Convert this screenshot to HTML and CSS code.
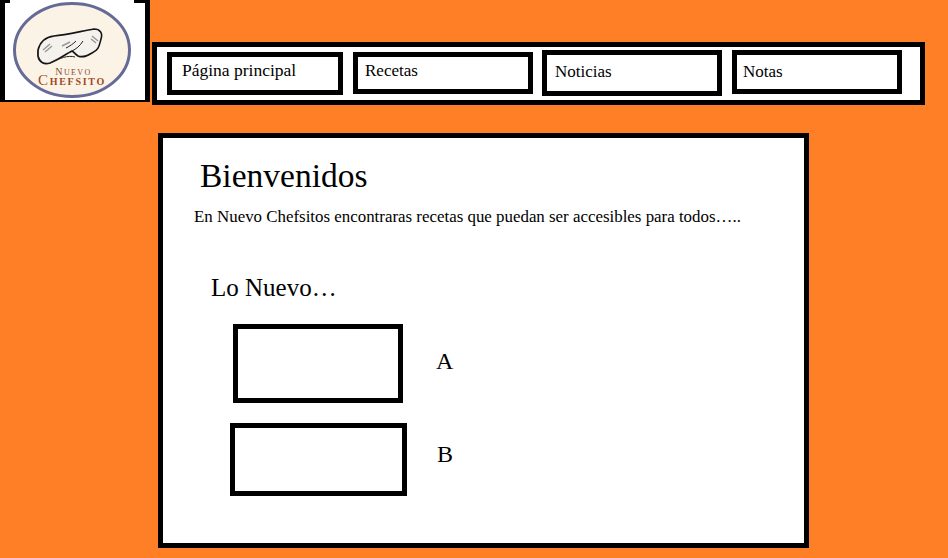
FILE: index.html
```html
<!DOCTYPE html>
<html lang="es">
<head>
<meta charset="UTF-8">
<meta name="viewport" content="width=device-width, initial-scale=1.0">
<title>Nuevo Chefsito</title>
<link rel="stylesheet" href="styles.css">
</head>
<body>

<div class="header">
  <div class="logo">
    <svg class="logoImg" viewBox="5 0 140 100" width="140" height="100">
      <ellipse cx="72" cy="50" rx="57.5" ry="46.5" fill="#fbf3e6" stroke="#666a96" stroke-width="3"/>
      <path d="M38 50 C40 42 46 37 54 36 C66 35 82 31 94 29 C100 29 103 33 101 39 C99 46 99 50 92 53 C87 56 83 58 78 56 C75 54 74 52 72 51 C66 54 58 60 50 63 C44 65 39 62 38 56 Z" fill="#f5f2ee" stroke="#151515" stroke-width="1.6"/>
      <path d="M38 50 C37 55 39 60 42 62 M72 51 C76 49 80 46 83 41 M66 48 C70 46 73 44 76 41 M50 63 C60 58 68 55 75 57" fill="none" stroke="#222" stroke-width="1"/>
      <path d="M43 50 L50 44 M45 52 L52 46 M92 36 L98 41 M91 39 L96 43 M62 46 L70 42" fill="none" stroke="#999" stroke-width="1.5"/>
      <text class="logoTop" x="73.5" y="75" text-anchor="middle"><tspan class="logoCap">N</tspan>UEVO</text>
      <text class="logoBottom" x="72" y="84.5" text-anchor="middle"><tspan class="logoCapBig">C</tspan>HEFSITO</text>
    </svg>
  </div>
  <div class="nav">
    <a class="navItem item1">Página principal</a>
    <a class="navItem item2">Recetas</a>
    <a class="navItem item3">Noticias</a>
    <a class="navItem item4">Notas</a>
  </div>
</div>

<div class="main">
  <h1>Bienvenidos</h1>
  <p class="intro">En Nuevo Chefsitos encontraras recetas que puedan ser accesibles para todos…..</p>
  <h2>Lo Nuevo…</h2>
  <div class="row rowA">
    <div class="box boxA"></div>
    <span class="label">A</span>
  </div>
  <div class="row rowB">
    <div class="box boxB"></div>
    <span class="label">B</span>
  </div>
</div>

</body>
</html>
```
FILE: styles.css
```css
body {
  font-family: "Liberation Serif", serif;
  background: #ff7f27;
  color: #000;
  margin: 0;
  height: 558px;
  overflow: hidden;
}
.header {
  display: flex;
  align-items: flex-start;
}
.logo {
  position: relative;
  width: 150px;
  height: 102px;
  box-sizing: border-box;
  background: #fff;
  border-left: 5px solid #000;
  border-right: 5px solid #000;
  border-bottom: 2px solid #000;
}
/* esquinas negras del recorte */
.logo::before {
  content: "";
  position: absolute;
  top: 0;
  left: 0;
  width: 5px;
  height: 3px;
  background: #000;
}
.logo::after {
  content: "";
  position: absolute;
  top: 0;
  right: 0;
  width: 11px;
  height: 3px;
  background: #000;
}
.logoImg {
  display: block;
}
.logoTop {
  font-size: 8px;
  fill: #8f4a2a;
  letter-spacing: 1.4px;
}
.logoCap {
  font-size: 10px;
}
.logoBottom {
  font-size: 10px;
  fill: #a04a20;
  letter-spacing: 1.7px;
  font-weight: bold;
}
.logoCapBig {
  font-size: 15px;
  font-weight: normal;
}
.nav {
  display: flex;
  align-items: flex-start;
  box-sizing: border-box;
  width: 773px;
  height: 63px;
  margin: 42px 0 0 2px;
  background: #fff;
  border: 5px solid #000;
}
.navItem {
  display: block;
  box-sizing: border-box;
  border: 5px solid #000;
  background: #fff;
  font-size: 17px;
  line-height: 20px;
}
.item1 {
  width: 176px;
  height: 43px;
  margin: 5px 0 0 10px;
  padding: 3px 0 0 10px;
  font-size: 17.5px;
}
.item2 {
  width: 180px;
  height: 42px;
  margin: 5px 0 0 10px;
  padding: 4px 0 0 7px;
}
.item3 {
  width: 180px;
  height: 46px;
  margin: 3px 0 0 9px;
  padding: 7px 0 0 8px;
}
.item4 {
  width: 170px;
  height: 44px;
  margin: 3px 0 0 10px;
  padding: 7px 0 0 6px;
}
.main {
  box-sizing: border-box;
  width: 651px;
  height: 415px;
  margin: 28px 0 0 158px;
  background: #fff;
  border: 5px solid #000;
  padding-top: 19px;
}
h1 {
  font-size: 33.5px;
  font-weight: normal;
  line-height: 38px;
  margin: 0 0 0 37px;
}
.intro {
  font-size: 16.9px;
  line-height: 20px;
  margin: 12px 0 0 31px;
}
h2 {
  font-size: 25px;
  font-weight: normal;
  line-height: 28px;
  margin: 47px 0 0 48px;
}
.row {
  display: flex;
  align-items: center;
}
.box {
  box-sizing: border-box;
  background: #fff;
  border: 5px solid #000;
}
.label {
  font-size: 24px;
}
.rowA {
  margin: 22px 0 0 70px;
}
.boxA {
  width: 170px;
  height: 79px;
}
.rowA .label {
  margin: 0 0 4px 33px;
}
.rowB {
  margin: 20px 0 0 67px;
}
.boxB {
  width: 177px;
  height: 73px;
}
.rowB .label {
  margin: 0 0 10px 30px;
}
```
